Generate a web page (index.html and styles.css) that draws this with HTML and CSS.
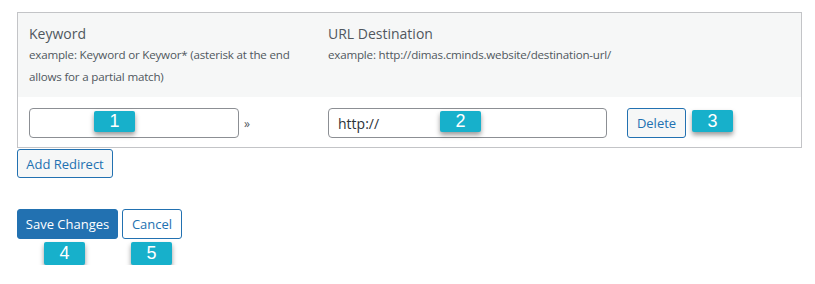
FILE: index.html
```html
<!DOCTYPE HTML>
<html lang="en">
<head>
    <meta charset="UTF-8">
    <title>Redirects</title>
    <link rel="stylesheet" href="styles.css">
</head>
<body>
    <div class="redirects">
        <div class="head-row">
            <div class="cell">
                <div class="col-title">Keyword</div>
                <div class="col-hint">example: Keyword or Keywor* (asterisk at the end allows for a partial match)</div>
            </div>
            <div class="cell">
                <div class="col-title">URL Destination</div>
                <div class="col-hint">example: http://dimas.cminds.website/destination-url/</div>
            </div>
        </div>
        <div class="body-row">
            <div class="cell cell-inline">
                <span class="field-wrap">
                    <input type="text" class="field field-keyword">
                    <span class="badge badge-1">1</span>
                </span>
                <span class="arrow">&raquo;</span>
            </div>
            <div class="cell cell-inline">
                <span class="field-wrap">
                    <input type="text" class="field field-url" value="http://">
                    <span class="badge badge-2">2</span>
                </span>
                <button class="btn btn-secondary btn-delete">Delete</button>
                <span class="badge badge-3">3</span>
            </div>
        </div>
    </div>
    <button class="btn btn-secondary btn-add">Add Redirect</button>

    <div class="actions">
        <div class="btn-col">
            <button class="btn btn-primary">Save Changes</button>
            <span class="badge badge-4">4</span>
        </div>
        <div class="btn-col">
            <button class="btn btn-secondary">Cancel</button>
            <span class="badge badge-5">5</span>
        </div>
    </div>
</body>
</html>
```

FILE: styles.css
```css
body {
    font-family: "Open Sans", "Noto Sans", sans-serif;
    color: #50575e;
    background-color: #ffffff;
    margin: 0;
    padding: 12px 0 0 17px;
}

.redirects {
    width: 783px;
    border: 1px solid #c3c4c7;
}

.head-row,
.body-row {
    display: grid;
    grid-template-columns: 299px 1fr;
}

.head-row {
    background-color: #f6f7f7;
    padding: 11px 0 9px;
}

.body-row {
    padding: 11px 0 9px;
}

.cell {
    padding-left: 11px;
}

.cell-inline {
    display: flex;
    align-items: center;
}

.col-title {
    font-size: 14px;
    line-height: 20px;
}

.col-hint {
    font-size: 11.6px;
    line-height: 22px;
    letter-spacing: -0.2px;
    width: 262px;
}

.head-row .cell:last-child .col-hint {
    width: auto;
}

.field-wrap {
    position: relative;
    display: inline-block;
}

.field {
    box-sizing: border-box;
    height: 30px;
    border: 1px solid #8c8f94;
    border-radius: 4px;
    padding: 0 9px;
    font-family: "Open Sans", "Noto Sans", sans-serif;
    font-size: 14px;
    color: #2c3338;
    background-color: #ffffff;
    display: block;
}

.field-keyword {
    width: 210px;
}

.field-url {
    width: 279px;
}

.arrow {
    margin-left: 5px;
    font-size: 12px;
    color: #50575e;
    padding-top: 1px;
}

.btn {
    box-sizing: border-box;
    height: 30px;
    padding: 0 10px;
    border-radius: 3px;
    font-family: "Open Sans", "Noto Sans", sans-serif;
    font-size: 13px;
    cursor: pointer;
}

.btn-secondary {
    color: #2271b1;
    border: 1px solid #2271b1;
    background-color: #f6f7f7;
}

.btn-primary {
    color: #ffffff;
    border: 1px solid #2271b1;
    background-color: #2271b1;
}

.btn-delete {
    width: 59px;
    padding: 0;
    margin-left: 20px;
}

.btn-add {
    display: block;
    width: 96px;
    height: 29px;
    padding: 0;
    margin-top: 1px;
}

.actions {
    display: flex;
    gap: 4px;
    margin-top: 31px;
}

.btn-col {
    display: flex;
    flex-direction: column;
    align-items: flex-start;
    gap: 3px;
}

.actions .btn-primary {
    width: 101px;
    padding: 0;
}

.actions .btn-secondary {
    width: 60px;
    padding: 0;
    background-color: #ffffff;
}

/* numbered callouts */
.badge {
    display: inline-flex;
    align-items: center;
    justify-content: center;
    width: 41px;
    height: 21px;
    background-color: #17b0cb;
    color: #ffffff;
    font-family: "Liberation Sans", Arial, sans-serif;
    font-size: 18px;
    border-radius: 2px;
    box-shadow: 0 3px 5px rgba(0, 0, 0, 0.4);
}

.badge-1,
.badge-2 {
    position: absolute;
    top: 3px;
}

.badge-1 {
    left: 65px;
}

.badge-2 {
    left: 112px;
}

.badge-3 {
    margin-left: 6px;
    height: 22px;
    margin-top: -4px;
}

.badge-4 {
    height: 23px;
    margin-left: 27px;
}

.badge-5 {
    height: 23px;
    margin-left: 9px;
}
```
